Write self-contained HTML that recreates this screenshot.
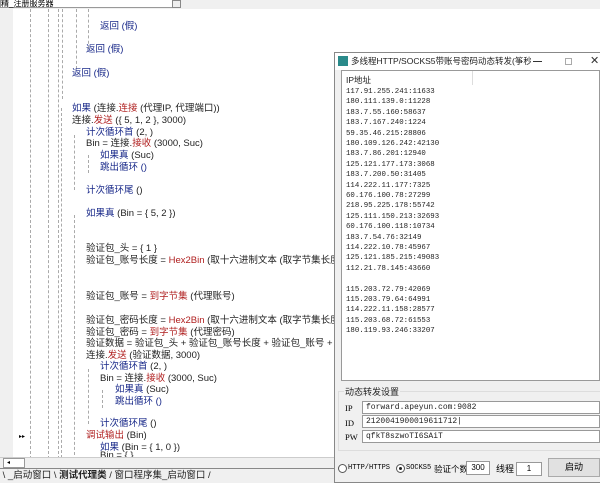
<!DOCTYPE html><html><head><meta charset="utf-8"><style>
*{margin:0;padding:0;box-sizing:border-box}
body{width:600px;height:483px;overflow:hidden;background:#fff;font-family:"Liberation Sans","Noto Sans CJK SC",sans-serif;position:relative}
.a{position:absolute;white-space:nowrap}
.c{font-size:9.5px;color:#222}
.b{color:#1a2a8a}.r{color:#b02020}
.d{position:absolute;border-left:1px dashed #aaa}
.ip{font-family:"Liberation Mono",monospace;font-size:7.4px;color:#222;position:absolute;left:346px}
.inp{position:absolute;left:362px;width:238px;height:13px;border:1px solid #999;background:#fff;font-family:"Liberation Mono",monospace;font-size:8px;padding:1px 3px;color:#222}
</style></head><body>
<div class="a" style="left:0;top:0;width:600px;height:9px;background:#f0f0f0"></div>
<div class="a" style="left:0;top:0;width:180px;height:8px;background:#fff;border:1px solid #999;border-top:0;font-size:8px;line-height:7px">精_注册服务器</div>
<div class="a" style="left:172px;top:0;width:9px;height:8px;border:1px solid #888;background:#eee"></div>
<div class="a" style="left:0;top:9px;width:13px;height:450px;background:#f0f0f0"></div>
<div class="d" style="left:30px;top:9px;height:450px"></div>
<div class="d" style="left:48px;top:9px;height:450px"></div>
<div class="d" style="left:58px;top:9px;height:450px"></div>
<div class="d" style="left:62px;top:9px;height:90px"></div>
<div class="d" style="left:76px;top:9px;height:60px"></div>
<div class="d" style="left:88px;top:9px;height:40px"></div>
<div class="d" style="left:61px;top:108px;height:350px"></div>
<div class="d" style="left:74px;top:135px;height:55px"></div>
<div class="d" style="left:88px;top:155px;height:18px"></div>
<div class="d" style="left:74px;top:215px;height:245px"></div>
<div class="d" style="left:88px;top:369px;height:55px"></div>
<div class="d" style="left:102px;top:390px;height:18px"></div>
<div class="c a b" style="left:100px;top:18px">返回 (假)</div>
<div class="c a b" style="left:86px;top:41px">返回 (假)</div>
<div class="c a b" style="left:72px;top:65px">返回 (假)</div>
<div class="c a" style="left:72px;top:100px"><span class="b">如果</span> (连接.<span class="r">连接</span> (代理IP, 代理端口))</div>
<div class="c a" style="left:72px;top:112px">连接.<span class="r">发送</span> ({ 5, 1, 2 }, 3000)</div>
<div class="c a" style="left:86px;top:124px"><span class="b">计次循环首</span> (2, )</div>
<div class="c a" style="left:86px;top:135px">Bin = 连接.<span class="r">接收</span> (3000, Suc)</div>
<div class="c a" style="left:100px;top:147px"><span class="b">如果真</span> (Suc)</div>
<div class="c a b" style="left:100px;top:159px">跳出循环 ()</div>
<div class="c a" style="left:86px;top:182px"><span class="b">计次循环尾</span> ()</div>
<div class="c a" style="left:86px;top:205px"><span class="b">如果真</span> (Bin = { 5, 2 })</div>
<div class="c a" style="left:86px;top:240px">验证包_头 = { 1 }</div>
<div class="c a" style="left:86px;top:252px">验证包_账号长度 = <span class="r">Hex2Bin</span> (取十六进制文本 (取字节集长度 (到字节</div>
<div class="c a" style="left:86px;top:288px">验证包_账号 = <span class="r">到字节集</span> (代理账号)</div>
<div class="c a" style="left:86px;top:312px">验证包_密码长度 = <span class="r">Hex2Bin</span> (取十六进制文本 (取字节集长度 (到字节</div>
<div class="c a" style="left:86px;top:324px">验证包_密码 = <span class="r">到字节集</span> (代理密码)</div>
<div class="c a" style="left:86px;top:335px">验证数据 = 验证包_头 + 验证包_账号长度 + 验证包_账号 + 验证包</div>
<div class="c a" style="left:86px;top:347px">连接.<span class="r">发送</span> (验证数据, 3000)</div>
<div class="c a" style="left:100px;top:358px"><span class="b">计次循环首</span> (2, )</div>
<div class="c a" style="left:100px;top:370px">Bin = 连接.<span class="r">接收</span> (3000, Suc)</div>
<div class="c a" style="left:115px;top:381px"><span class="b">如果真</span> (Suc)</div>
<div class="c a b" style="left:115px;top:393px">跳出循环 ()</div>
<div class="c a" style="left:100px;top:415px"><span class="b">计次循环尾</span> ()</div>
<div class="c a r" style="left:86px;top:427px">调试输出 <span style="color:#222">(Bin)</span></div>
<div class="c a" style="left:100px;top:439px"><span class="b">如果</span> (Bin = { 1, 0 })</div>
<div class="c a" style="left:100px;top:450px">Bin = { }</div>
<div class="a" style="left:19px;top:433px;font-size:6px">▸▸</div>
<div class="a" style="left:0;top:457px;width:334px;height:11px;background:#f0f0f0;border-top:1px solid #ccc"></div>
<div class="a" style="left:3px;top:458px;width:22px;height:10px;border:1px solid #999;background:#fff;font-size:6px;line-height:8px;padding-left:3px">◂</div>
<div class="a" style="left:0;top:468px;width:334px;height:15px;background:#f0f0f0;border-top:1px solid #888;font-size:9.5px;line-height:13px;color:#222">&nbsp;\ _启动窗口 \ <b>测试代理类</b> / 窗口程序集_启动窗口 /</div>
<!-- dialog -->
<div class="a" style="left:334px;top:52px;width:266px;height:431px;background:#f0f0f0;border:1px solid #888;border-right:0"></div>
<div class="a" style="left:335px;top:53px;width:265px;height:17px;background:#fff"></div>
<div class="a" style="left:338px;top:56px;width:10px;height:10px;background:#2a8a8a"></div>
<div class="a" style="left:351px;top:55px;font-size:8.5px;color:#222;width:180px;overflow:hidden">多线程HTTP/SOCKS5带账号密码动态转发(筝秒...</div>
<div class="a" style="left:533px;top:61px;width:9px;height:1px;background:#333"></div>
<div class="a" style="left:565px;top:58px;width:7px;height:7px;border:1px solid #aaa"></div>
<div class="a" style="left:590px;top:54px;font-size:11px;color:#333">✕</div>
<div class="a" style="left:341px;top:70px;width:259px;height:311px;background:#fff;border:1px solid #999"></div>
<div class="a" style="left:472px;top:71px;width:1px;height:14px;background:#ddd"></div>
<div class="a" style="left:346px;top:74px;font-size:8.5px;color:#222">IP地址</div>
<div class="ip" style="top:88px">117.91.255.241:11633</div>
<div class="ip" style="top:98px">180.111.139.0:11228</div>
<div class="ip" style="top:109px">183.7.55.160:58637</div>
<div class="ip" style="top:119px">183.7.167.240:1224</div>
<div class="ip" style="top:130px">59.35.46.215:28806</div>
<div class="ip" style="top:140px">180.109.126.242:42130</div>
<div class="ip" style="top:150px">183.7.86.201:12940</div>
<div class="ip" style="top:161px">125.121.177.173:3068</div>
<div class="ip" style="top:171px">183.7.200.50:31405</div>
<div class="ip" style="top:182px">114.222.11.177:7325</div>
<div class="ip" style="top:192px">60.176.100.78:27299</div>
<div class="ip" style="top:202px">218.95.225.178:55742</div>
<div class="ip" style="top:213px">125.111.150.213:32693</div>
<div class="ip" style="top:223px">60.176.100.118:10734</div>
<div class="ip" style="top:234px">183.7.54.76:32149</div>
<div class="ip" style="top:244px">114.222.10.78:45967</div>
<div class="ip" style="top:254px">125.121.185.215:49083</div>
<div class="ip" style="top:265px">112.21.78.145:43660</div>
<div class="ip" style="top:286px">115.203.72.79:42069</div>
<div class="ip" style="top:296px">115.203.79.64:64991</div>
<div class="ip" style="top:306px">114.222.11.158:28577</div>
<div class="ip" style="top:317px">115.203.68.72:61553</div>
<div class="ip" style="top:327px">180.119.93.246:33207</div>
<div class="a" style="left:338px;top:391px;width:262px;height:60px;border:1px solid #ddd;border-right:0"></div>
<div class="a" style="left:344px;top:385px;font-size:9px;color:#222;background:#f0f0f0;padding:0 1px">动态转发设置</div>
<div class="a" style="left:345px;top:403px;font-size:8.5px;font-family:'Liberation Serif',serif">IP</div>
<div class="a" style="left:345px;top:418px;font-size:8.5px;font-family:'Liberation Serif',serif">ID</div>
<div class="a" style="left:345px;top:432px;font-size:8.5px;font-family:'Liberation Serif',serif">PW</div>
<div class="inp" style="top:401px">forward.apeyun.com:9082</div>
<div class="inp" style="top:415px">2120041900019611712|</div>
<div class="inp" style="top:430px">qfkT8szwoTI6SAiT</div>
<div class="a" style="left:338px;top:464px;width:9px;height:9px;border:1px solid #555;border-radius:50%;background:#fff"></div>
<div class="a" style="left:348px;top:464px;font-size:7px;font-family:'Liberation Mono',monospace">HTTP/HTTPS</div>
<div class="a" style="left:396px;top:464px;width:9px;height:9px;border:1px solid #555;border-radius:50%;background:#fff"><div style="margin:2px;width:3px;height:3px;border-radius:50%;background:#222"></div></div>
<div class="a" style="left:406px;top:464px;font-size:7px;font-family:'Liberation Mono',monospace">SOCKS5</div>
<div class="a" style="left:434px;top:463px;font-size:8.5px">验证个数</div>
<div class="a" style="left:466px;top:461px;width:24px;height:14px;border:1px solid #999;background:#fff;font-size:8px;text-align:center;line-height:12px">300</div>
<div class="a" style="left:496px;top:462px;font-size:9px">线程</div>
<div class="a" style="left:516px;top:462px;width:26px;height:14px;border:1px solid #999;background:#fff;font-size:8px;text-align:center;line-height:12px">1</div>
<div class="a" style="left:548px;top:458px;width:52px;height:19px;border:1px solid #aaa;background:#e1e1e1;font-size:9px;text-align:center;line-height:17px">启动</div>
</body></html>
